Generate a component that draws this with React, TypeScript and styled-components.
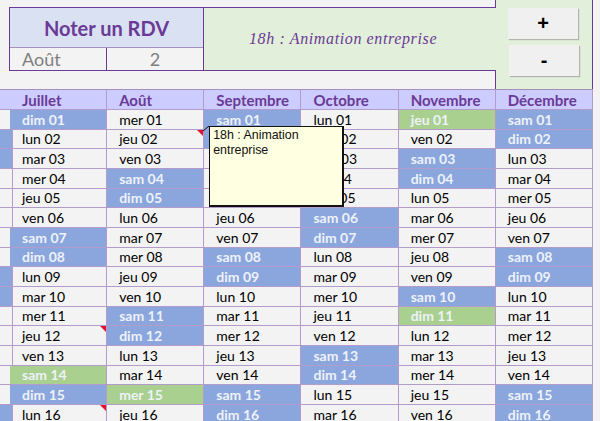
import React from 'react';
import styled, {createGlobalStyle} from 'styled-components';

const PURPLE = '#6a3a96';
const CELL_LINE = '#b39ccb';

const GlobalStyle = createGlobalStyle`
  html, body {
    margin: 0;
    height: 100%;
    overflow: hidden;
    background: #f3f3f3;
  }
  #root {
    height: 100%;
  }
`;

const Sheet = styled.div`
  width: 600px;
  height: 421px;
  overflow: hidden;
  font-family: Lato, "Liberation Sans", sans-serif;
`;

const TopBand = styled.div`
  display: flex;
  height: 89px;
`;

const LeftBlock = styled.div`
  display: flex;
  flex-direction: column;
  width: 496px;
`;

const Strip = styled.div<{$height: number; $edge: 'top' | 'bottom'}>`
  height: ${p => p.$height}px;
  margin-left: 9px;
  box-sizing: border-box;
  border-right: 1px solid ${PURPLE};
  border-${p => p.$edge}: 1px solid ${PURPLE};
  background: #f3f3f3;
`;

const FormRow = styled.div`
  display: flex;
  flex: 1;
  margin-left: 9px;
`;

const Form = styled.div`
  display: flex;
  flex-direction: column;
  width: 195px;
  box-sizing: border-box;
  border-left: 1px solid ${PURPLE};
  border-right: 1px solid ${PURPLE};
  background: #f3f3f3;
`;

const FormTitle = styled.div`
  display: flex;
  align-items: center;
  justify-content: center;
  height: 39px;
  background: #d9e1f3;
  border-bottom: 1px solid #a58fbf;
  color: ${PURPLE};
  font-size: 20px;
  font-weight: 700;
`;

const FormFields = styled.div`
  display: grid;
  grid-template-columns: 96px 1fr;
  flex: 1;
`;

const FormField = styled.div<{$center?: boolean}>`
  display: flex;
  align-items: center;
  justify-content: ${p => (p.$center ? 'center' : 'flex-start')};
  padding-left: ${p => (p.$center ? 0 : 12)}px;
  color: #7f7f7f;
  font-size: 18px;
  & + & {
    border-left: 1px solid ${PURPLE};
  }
`;

const NotePanel = styled.div`
  display: flex;
  align-items: center;
  flex: 1;
  padding-left: 45px;
  background: #e2efda;
  color: ${PURPLE};
  font-family: "Liberation Serif", serif;
  font-style: italic;
  font-size: 16px;
  letter-spacing: 0.62px;
`;

const ButtonPanel = styled.div`
  display: flex;
  flex-direction: column;
  gap: 6px;
  width: 97px;
  box-sizing: border-box;
  padding: 8px 0 0 12px;
  background: #e2efda;
  border-right: 1px solid ${PURPLE};
`;

const StepButton = styled.button<{$shift?: number}>`
  width: 70px;
  height: 31px;
  margin-left: ${p => p.$shift ?? 0}px;
  padding: 0;
  border: none;
  background: #f0f0f0;
  box-shadow: 1px 1px 1px #b4b4ac;
  color: #000;
  font-family: "Liberation Sans", sans-serif;
  font-size: 20px;
  font-weight: 700;
`;

const HeaderRow = styled.div`
  display: grid;
  grid-template-columns: 10px repeat(6, 97.17px);
  width: 593px;
`;

const HeaderCell = styled.div`
  display: flex;
  align-items: center;
  height: 21px;
  box-sizing: border-box;
  padding-left: 12px;
  background: #ccccff;
  border-top: 1px solid #a58fbf;
  border-right: 1px solid ${CELL_LINE};
  border-bottom: 1px solid ${CELL_LINE};
  color: ${PURPLE};
  font-size: 15px;
  font-weight: 700;
`;

const Calendar = styled.div`
  display: grid;
  grid-template-columns: 10px repeat(6, 97.17px);
  grid-auto-rows: 19.67px;
  width: 593px;
`;

const fills = {
  plain: 'transparent',
  weekend: '#8aa6dc',
  marked: '#a9d08e'
};

const DayCell = styled.div<{$kind: keyof typeof fills}>`
  position: relative;
  display: flex;
  align-items: center;
  box-sizing: border-box;
  padding-left: 12px;
  background: ${p => fills[p.$kind]};
  border-right: 1px solid ${CELL_LINE};
  border-bottom: 1px solid ${CELL_LINE};
  color: ${p => (p.$kind === 'plain' ? '#000' : '#eef2fa')};
  font-size: 14px;
  font-weight: ${p => (p.$kind === 'plain' ? 400 : 700)};
`;

const CommentMark = styled.span`
  position: absolute;
  top: 0;
  right: 0;
  width: 0;
  height: 0;
  border-top: 6px solid #e8112d;
  border-left: 6px solid transparent;
`;

const Tooltip = styled.div`
  position: absolute;
  top: -4px;
  left: 102px;
  z-index: 5;
  width: 135px;
  height: 81px;
  box-sizing: border-box;
  padding: 1px 3px;
  background: #ffffe1;
  border: 1px solid #111;
  border-right-width: 2px;
  border-bottom-width: 2px;
  color: #111;
  font-family: "Liberation Sans", sans-serif;
  font-size: 12.4px;
  font-weight: 400;
  line-height: 15px;
`;

const TooltipArrow = styled.svg`
  position: absolute;
  top: -4px;
  left: 96px;
  z-index: 4;
`;

const DAYS = ['dim', 'lun', 'mar', 'mer', 'jeu', 'ven', 'sam'];
// premier jour de chaque mois, juin sert de colonne coupee a gauche
const MONTHS = [
  {name: '', first: 5, label: false},
  {name: 'Juillet', first: 0, label: true},
  {name: 'Août', first: 3, label: true},
  {name: 'Septembre', first: 6, label: true},
  {name: 'Octobre', first: 1, label: true},
  {name: 'Novembre', first: 4, label: true},
  {name: 'Décembre', first: 6, label: true}
];
const MARKED = ['Juillet-14', 'Août-15', 'Novembre-1', 'Novembre-11'];
const COMMENTS = ['Juillet-12', 'Juillet-16', 'Août-2'];

const App = () => {
  const rows = Array.from({length: 16}, (_, i) => i + 1);
  return (
    <Sheet>
      <GlobalStyle/>
      <TopBand>
        <LeftBlock>
          <Strip $height={9} $edge="bottom"/>
          <FormRow>
            <Form>
              <FormTitle>Noter un RDV</FormTitle>
              <FormFields>
                <FormField>Août</FormField>
                <FormField $center>2</FormField>
              </FormFields>
            </Form>
            <NotePanel>18h : Animation entreprise</NotePanel>
          </FormRow>
          <Strip $height={20} $edge="top"/>
        </LeftBlock>
        <ButtonPanel>
          <StepButton>+</StepButton>
          <StepButton $shift={1}>-</StepButton>
        </ButtonPanel>
      </TopBand>
      <HeaderRow>
        {MONTHS.map(month => <HeaderCell key={month.first + month.name}>{month.name}</HeaderCell>)}
      </HeaderRow>
      <Calendar>
        {rows.map(day => MONTHS.map(month => {
          const weekday = (month.first + day - 1) % 7;
          const key = `${month.name}-${day}`;
          const weekend = weekday === 0 || weekday === 6;
          const kind = MARKED.includes(key) ? 'marked' : weekend ? 'weekend' : 'plain';
          return (
            <DayCell key={`${month.first}-${key}`} $kind={kind}>
              {month.label && `${DAYS[weekday]} ${String(day).padStart(2, '0')}`}
              {COMMENTS.includes(key) && <CommentMark/>}
              {key === 'Août-2' && (
                <>
                  <TooltipArrow width="7" height="6">
                    <line x1="0" y1="5" x2="6" y2="0" stroke="#111"/>
                  </TooltipArrow>
                  <Tooltip>18h : Animation entreprise</Tooltip>
                </>
              )}
            </DayCell>
          );
        }))}
      </Calendar>
    </Sheet>
  );
};

export default App;
